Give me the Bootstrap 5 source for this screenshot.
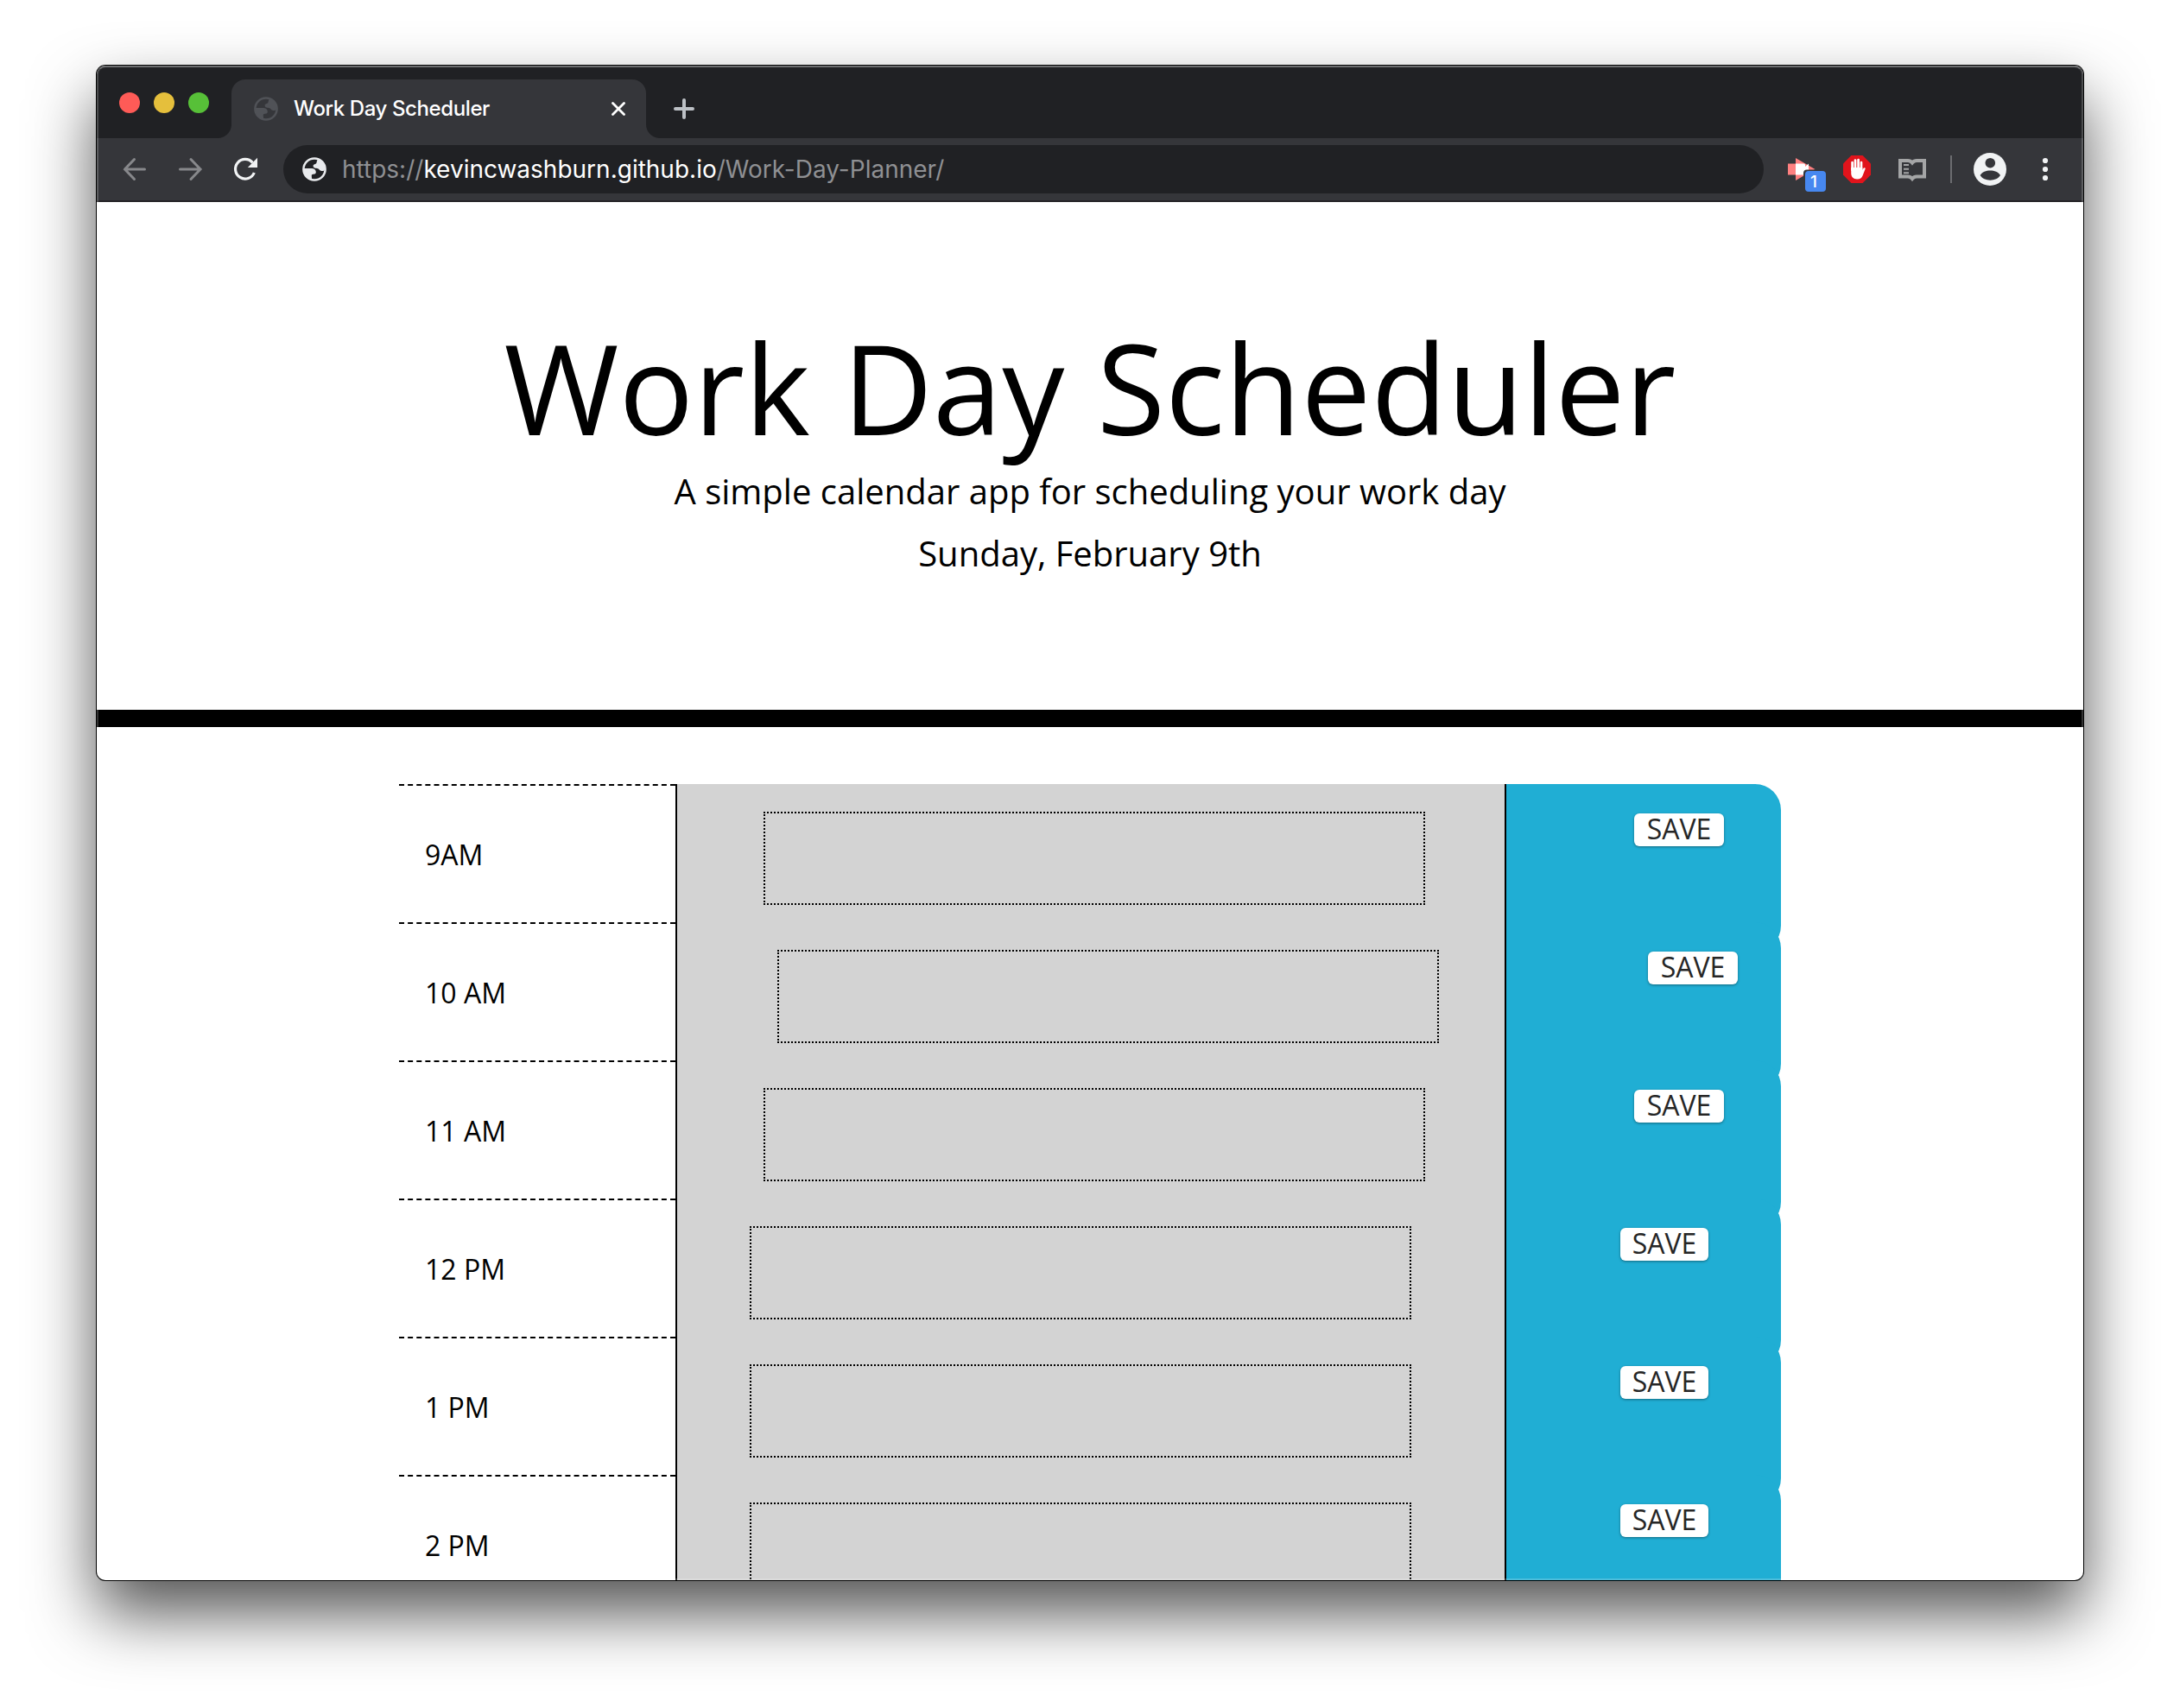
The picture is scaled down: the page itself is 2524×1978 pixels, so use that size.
<!DOCTYPE html>
<html lang="en">
<head>
<meta charset="utf-8">
<title>Work Day Scheduler</title>
<link href="https://cdn.jsdelivr.net/npm/bootstrap@5.3.0/dist/css/bootstrap.min.css" rel="stylesheet">
<style>
body{background:#fff;color:#000;font-family:"Open Sans",sans-serif;height:1978px;padding:76px 112px 0;overflow:hidden}
svg{display:block;flex:none}
.win{width:2300px;height:1754px;border-radius:10px;background:#fff;box-shadow:0 0 0 1px #000,0 38px 76px rgba(0,0,0,.68)}
.win::after{content:"";position:absolute;inset:0;border-radius:10px;border:2px solid rgba(255,255,255,.2);border-top-color:rgba(255,255,255,.35);pointer-events:none}
.win-body{border-radius:10px}
.chrome-ui{font-family:Inter,sans-serif}
.strip{height:84px;background:#202124;padding:16px 0 0 26px}
.lights{width:130px;gap:16px;padding:15px 0 0}
.light{width:24px;height:24px;border-radius:50%}
.red{background:#fe5b57}.amber{background:#e5bf3c}.green{background:#57c038}
.tab{width:480px;height:68px;border-radius:16px 16px 0 0;background:#35363a;padding:0 24px 0 26px;color:#fff;font-size:24px}
.tab::before,.tab::after{content:"";position:absolute;bottom:0;width:16px;height:16px}
.tab::before{left:-16px;background:radial-gradient(circle at 0 0,transparent 15.5px,#35363a 16.5px)}
.tab::after{right:-16px;background:radial-gradient(circle at 100% 0,transparent 15.5px,#35363a 16.5px)}
.tab-name{margin-left:18px;letter-spacing:-.4px;font-weight:500}
.dim{color:#505257}.lit{color:#e8eaed}
.plus{margin:22px 0 0 32px}
.toolbar{height:74px;background:#35363a;border-bottom:2px solid #252427;padding:8px 0 8px 28px}
.reload{margin-left:32px}
.omni{flex:none;width:1714px;height:56px;border-radius:28px;background:#202124;padding-left:22px;margin-left:28px;font-size:28px;color:#8f9093}
.addr{margin-left:18px;white-space:nowrap}
.ext-a{margin-left:28px}.ext{margin-left:32px}
.count{left:20px;top:18px;width:24px;height:24px;border-radius:4px;background:#4788f0;color:#fff;font-size:19px;font-weight:500;line-height:25px;padding-right:4px}
.sep{flex:none;width:2px;height:32px;margin-left:28px;background:#6c6d70}
.me{margin-left:25px}.dots{margin-left:41px}
.hero{height:608px;padding-top:128px;border-bottom:20px solid #000}
.hero h1{font-size:144px;line-height:172.8px;font-weight:400;letter-spacing:.1px}
.sub{font-size:40px;line-height:60px;margin-bottom:12px}
.planner{width:1600px;height:988px;padding-top:66px}
.slot{height:160px;font-size:32px}
.hour{width:320px;border-top:2px dashed #000;padding:0 0 0 30px;line-height:160px;height:160px}
.event{width:962px;background:#d3d3d3;border:solid #000;border-width:0 2px;padding-top:32px}
.note{width:766px;height:108px;border:2px dotted #000;background:transparent}
.saver{width:318px;height:194px;background:#20aed4;border-radius:0 30px 30px 0;padding-top:34px}
.save-btn{width:104px;height:38px;border:0;border-radius:6px;background:#fff;color:#262626;line-height:36px;padding:0 0 2px;box-shadow:0 1px 3px rgba(0,0,0,.4)}
.in-a .note{margin-left:100px}.in-a .save-btn{margin-left:148px}
.in-b .note{margin-left:116px}.in-b .save-btn{margin-left:164px}
.in-c .note{margin-left:84px}.in-c .save-btn{margin-left:132px;width:102px}
</style>
<script src="https://cdn.jsdelivr.net/npm/bootstrap@5.3.0/dist/js/bootstrap.bundle.min.js"></script>
</head>
<body>
<svg width="0" height="0" class="position-absolute">
<symbol id="globe" viewBox="0 0 28 28"><circle cx="14" cy="14" r="12.600" fill="none" stroke="currentColor" stroke-width="2.500"/><path fill="currentColor" d="M1.500 13H10C13.500 13 15.800 14.500 15.800 17.300C15.800 19.800 14 19.600 11.600 20C10.300 20.300 11 22 11.200 26.500C5 25.500 1 20 1.500 13zM18.500 2C22.500 3.500 26 8 26.300 14C25 16.500 23 16.300 21.500 15.800C19.500 15 19.800 13.700 18 13.200C15.500 12.600 13 13 12.600 10.200C12.500 8 15.300 8.600 16.300 7C17 5.500 16.500 3.500 18.500 2z"/></symbol>
</svg>
<main class="win position-relative">
<div class="win-body overflow-hidden h-100">
<header class="chrome-ui">
<div class="strip d-flex align-items-start">
  <div class="lights d-flex">
    <span class="light red"></span><span class="light amber"></span><span class="light green"></span>
  </div>
  <div class="tab position-relative d-flex align-items-center">
    <svg class="dim" width="28" height="28"><use href="#globe"/></svg>
    <span class="tab-name">Work Day Scheduler</span>
    <svg class="ms-auto" width="16" height="16" viewBox="0 0 16 16"><path d="M1.500 1.500l13 13M14.500 1.500l-13 13" stroke="#fff" stroke-width="2.800" stroke-linecap="round"/></svg>
  </div>
  <svg class="plus" width="24" height="24" viewBox="0 0 24 24"><path d="M12 2v20M2 12h20" stroke="#bdc1c6" stroke-width="4" stroke-linecap="round"/></svg>
</div>
<div class="toolbar d-flex align-items-center">
  <svg width="32" height="32" viewBox="0 0 32 32" fill="none" stroke="#87888b" stroke-width="3" stroke-linecap="round"><path d="M27.500 16H4.500M15.500 4.500L4.500 16l11 11.500"/></svg>
  <svg class="ms-4" width="40" height="32" viewBox="0 0 40 32" fill="none" stroke="#87888b" stroke-width="3" stroke-linecap="round"><path d="M12.500 16h23M25 4.500L36 16L25 27.500"/></svg>
  <svg class="reload" width="32" height="32" viewBox="0 0 32 32"><path d="M26.300 20A11.300 11.300 0 1 1 24.400 8.400" fill="none" stroke="#f1f3f4" stroke-width="3.200"/><path d="M30 2.800V14H18.800z" fill="#f1f3f4"/></svg>
  <div class="omni d-flex align-items-center">
    <svg class="lit" width="28" height="28"><use href="#globe"/></svg>
    <span class="addr">https://<span class="text-white">kevincwashburn.github.io</span>/Work-Day-Planner/</span>
  </div>
  <div class="ext-a position-relative">
    <svg width="32" height="32" viewBox="0 0 32 32"><path d="M0 9.500h10v13H0zM9 3l22.500 13L9 29z" fill="#ff8080"/><path d="M9 9.500h9.500c.8 0 1.500.7 1.500 1.500v2l4-3.500v13L20 19v2c0 .8-.7 1.500-1.500 1.500H9z" fill="#fff"/><path d="M18 20.500Q18 16.500 22 16.500h10v16H18z" fill="#35363a"/></svg>
    <span class="count position-absolute text-center">1</span>
  </div>
  <svg class="ext" width="32" height="32" viewBox="0 0 32 32"><path d="M9.400 0h13.200L32 9.400v13.200L22.600 32H9.400L0 22.600V9.400z" fill="#e1141c"/><path d="M10.600 8v9M14 5.500V16M17.600 5v11M21 8v9" stroke="#fff" stroke-width="2.700" stroke-linecap="round"/><path d="M9.250 14h13.100v3l1-2c.8-1.300 2.500-1 2.300.4l-3.100 8c-1.100 2.700-2.800 4-6.300 4c-4.700 0-7-3-7-7z" fill="#fff"/></svg>
  <svg class="ext" width="32" height="32" viewBox="0 0 32 32" fill="none" stroke="#a4a5a6"><path d="M16 8.500Q14 6 11 6H2V24.500H11Q14 24.500 16 27Q18 24.500 21 24.500h9V6H21Q18 6 16 8.500z" stroke-width="4"/><path d="M6 11h6M6 15.700h6M6 20.300h6" stroke-width="2"/></svg>
  <span class="sep"></span>
  <svg class="me" width="38" height="38" viewBox="0 0 38 38"><circle cx="19" cy="19" r="19" fill="#f1f3f4"/><circle cx="19.300" cy="11.700" r="5.800" fill="#35363a"/><path d="M7.600 26C12 18.800 26.500 18.800 31 26C26.500 33.500 12 33.500 7.600 26z" fill="#35363a"/></svg>
  <svg class="dots" width="8" height="28" viewBox="0 0 8 28" fill="#f1f3f4"><circle cx="4" cy="4" r="3.100"/><circle cx="4" cy="14" r="3.100"/><circle cx="4" cy="24" r="3.100"/></svg>
</div>
</header>
<section class="hero text-center">
  <h1 class="mb-1">Work Day Scheduler</h1>
  <p class="sub">A simple calendar app for scheduling your work day</p>
  <p class="sub">Sunday, February 9th</p>
</section>
<section class="planner mx-auto">
  <div class="slot d-flex in-a"><div class="hour">9AM</div><div class="event"><div class="note"></div></div><div class="saver"><button class="save-btn d-block">SAVE</button></div></div>
  <div class="slot d-flex in-b"><div class="hour">10 AM</div><div class="event"><div class="note"></div></div><div class="saver"><button class="save-btn d-block">SAVE</button></div></div>
  <div class="slot d-flex in-a"><div class="hour">11 AM</div><div class="event"><div class="note"></div></div><div class="saver"><button class="save-btn d-block">SAVE</button></div></div>
  <div class="slot d-flex in-c"><div class="hour">12 PM</div><div class="event"><div class="note"></div></div><div class="saver"><button class="save-btn d-block">SAVE</button></div></div>
  <div class="slot d-flex in-c"><div class="hour">1 PM</div><div class="event"><div class="note"></div></div><div class="saver"><button class="save-btn d-block">SAVE</button></div></div>
  <div class="slot d-flex in-c"><div class="hour">2 PM</div><div class="event"><div class="note"></div></div><div class="saver"><button class="save-btn d-block">SAVE</button></div></div>
</section>
</div>
</main>
</body>
</html>
